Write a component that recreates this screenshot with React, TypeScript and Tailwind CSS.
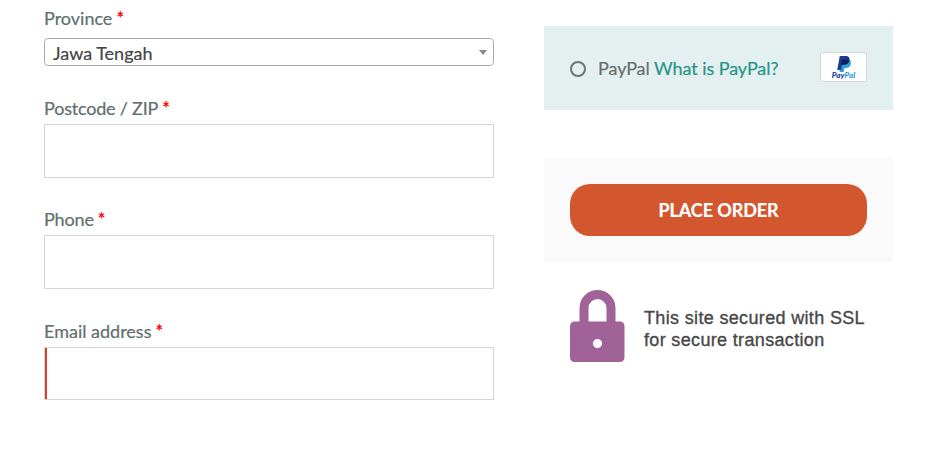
import type { ReactNode } from "react";

function Label({ children, htmlFor, spacing = "" }: { children: ReactNode; htmlFor: string; spacing?: string }) {
  return (
    <label htmlFor={htmlFor} className="flex h-[27px] whitespace-nowrap text-[18px] leading-[27px] text-[#60706e] [-webkit-text-stroke:0.200px_#60706e]">
      <span className={spacing}>{children}</span>
      <span className="ml-[4px] font-bold text-[#ff0000] [-webkit-text-stroke:0px]">*</span>
    </label>
  );
}

function PayPalBadge() {
  return (
    <span className="flex h-[30px] w-[47px] items-center justify-center rounded-[2px] border border-[#d3dad9] bg-white">
      <svg width="45" height="28" viewBox="0 0 45 28" fontFamily="Lato, sans-serif">
        <path d="M20 6.500h7.200c2.600.6 3.200 2.500 2.600 4.700-.7 2.700-2.600 3.800-5.200 3.800h-1.200l-.8 4h-4z" fill="#2aa0de" />
        <path d="M18.800 3h5.800c3.300 0 4.400 1.900 3.800 4.500-.7 2.900-2.700 4.400-5.700 4.400h-1.700l-.9 5.200h-3.900z" fill="#1b3c91" />
        <path d="M21 6.500h6.500c.7 0 1 .2.900 1-.7 2.900-2.700 4.400-5.700 4.400H20z" fill="#14215f" />
        <text x="10.800" y="24.800" fontSize="6.800" fontWeight="900" fontStyle="italic" textLength="23.500" lengthAdjust="spacingAndGlyphs">
          <tspan fill="#1b3c91">Pay</tspan><tspan fill="#2aa0de">Pal</tspan>
        </text>
      </svg>
    </span>
  );
}

function Padlock() {
  return (
    <svg width="55" height="73" viewBox="0 0 55 73" className="shrink-0" aria-hidden="true">
      <path d="M9.500 36V18a18 18 0 0 1 36 0v18h-9V18a9 9 0 0 0-18 0v18z" fill="#a16297" />
      <path fillRule="evenodd" d="M4.500 31.500h45.500a4.500 4.500 0 0 1 4.500 4.500v31.500a4.500 4.500 0 0 1-4.500 4.500H4.500a4.500 4.500 0 0 1-4.500-4.500V36a4.500 4.500 0 0 1 4.500-4.500zM27.500 49a4.600 4.600 0 1 0 0 9.200a4.600 4.600 0 0 0 0-9.200z" fill="#a16297" />
    </svg>
  );
}

export default function App() {
  return (
    <main className="flex h-[452px] w-[932px] overflow-hidden bg-white pl-[44px] font-['Lato',sans-serif]">
      <form className="flex w-[450px] flex-col pt-[5px]">
        <Label htmlFor="province">Province</Label>
        <button id="province" type="button" className="mt-[6px] flex h-[28px] items-center justify-between rounded-[4px] border border-[#aaaaaa] pr-[6px] pl-2 text-[18px] leading-[26px] text-[#444444]">
          <span className="pt-[1px] [-webkit-text-stroke:0.200px_#444444]">Jawa Tengah</span>
          <span className="h-0 w-0 border-x-[4px] border-t-[5px] border-x-transparent border-t-[#888888]" />
        </button>
        <div className="mt-[29px]">
          <Label htmlFor="postcode" spacing="tracking-[-0.200px]">Postcode / ZIP</Label>
          <input id="postcode" className="mt-[2px] block h-[54px] w-full border border-[#d5d5d5] outline-none" />
        </div>
        <div className="mt-[28px]">
          <Label htmlFor="phone" spacing="tracking-[-0.150px]">Phone</Label>
          <input id="phone" className="mt-[2px] block h-[54px] w-full border border-[#d5d5d5] outline-none" />
        </div>
        <div className="mt-[29px]">
          <Label htmlFor="email">Email address</Label>
          <div className="mt-[2px] h-[53px] border border-[#d5d5d5]">
            <input id="email" className="block h-full w-full border-l-2 border-[#db3e27] outline-none" />
          </div>
        </div>
      </form>
      <section className="ml-[50px] w-[349px] pt-[26px]">
        <div className="flex h-[84px] items-center bg-[#e4efef] px-[26px]">
          <span className="mt-[1px] -ml-[0.500px] h-[16px] w-[16px] rounded-full border-2 border-[#6a7675]" />
          <span className="ml-[12.500px] whitespace-nowrap text-[18px] leading-[27px] tracking-[-0.060px] text-[#666e6d] [-webkit-text-stroke:0.200px]">
            PayPal <a className="text-[#249688]">What is PayPal?</a>
          </span>
          <span className="ml-auto -mt-[2px]"><PayPalBadge /></span>
        </div>
        <div className="mt-[48px] h-[104px] bg-[#fafafa] p-[26px]">
          <button type="button" className="h-[52px] w-full rounded-[20px] bg-[#d2572f] text-[18px] font-bold tracking-[-0.080px] text-white [-webkit-text-stroke:0.200px]">PLACE ORDER</button>
        </div>
        <div className="flex pt-[28px] pl-[26px]">
          <Padlock />
          <p className="ml-[19px] pt-[17px] font-['Liberation_Sans',Arial,sans-serif] text-[18px] leading-[22px] tracking-[0.340px] whitespace-nowrap text-[#484848] [-webkit-text-stroke:0.350px_#484848]">
            This site secured with SSL<br />for secure transaction
          </p>
        </div>
      </section>
    </main>
  );
}
